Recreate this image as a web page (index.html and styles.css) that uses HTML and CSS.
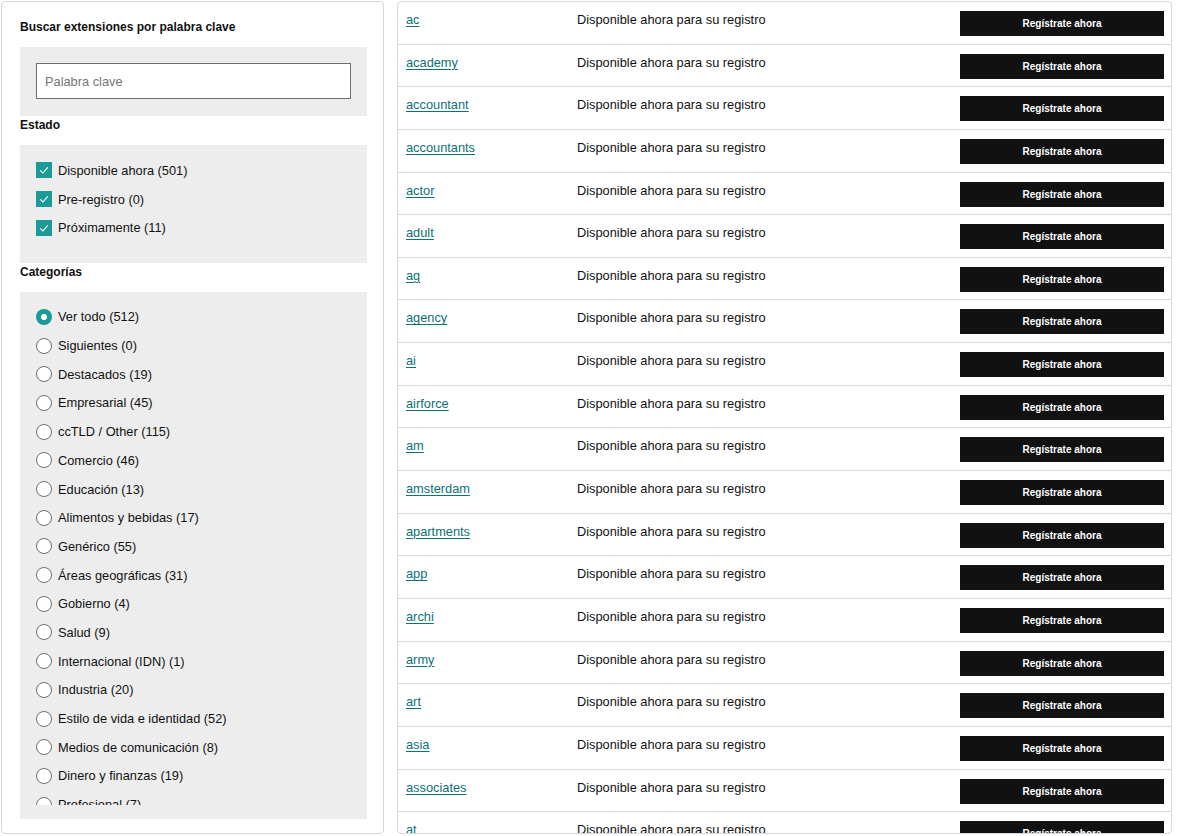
FILE: index.html
```html
<!DOCTYPE html>
<html lang="es">
<head>
<meta charset="utf-8">
<title>Extensiones de dominio</title>
<link rel="stylesheet" href="styles.css">
</head>
<body>
<div class="page">
  <aside class="filters">
    <h3 class="f-title">Buscar extensiones por palabra clave</h3>
    <div class="box box-search">
      <input class="kw" type="text" placeholder="Palabra clave">
    </div>

    <h3 class="f-title f-section">Estado</h3>
    <div class="box box-status">
      <label class="opt"><span class="cb"><svg viewBox="0 0 16 16" width="16" height="16"><polyline points="4.2,8.4 6.9,11 11.8,5.4" fill="none" stroke="#fff" stroke-width="1.1"/></svg></span>Disponible ahora (501)</label>
      <label class="opt"><span class="cb"><svg viewBox="0 0 16 16" width="16" height="16"><polyline points="4.2,8.4 6.9,11 11.8,5.4" fill="none" stroke="#fff" stroke-width="1.1"/></svg></span>Pre-registro (0)</label>
      <label class="opt"><span class="cb"><svg viewBox="0 0 16 16" width="16" height="16"><polyline points="4.2,8.4 6.9,11 11.8,5.4" fill="none" stroke="#fff" stroke-width="1.1"/></svg></span>Próximamente (11)</label>
    </div>

    <h3 class="f-title f-section">Categorías</h3>
    <div class="box box-cats">
      <div class="cat-scroll">
        <label class="opt"><span class="rb rb-on"></span>Ver todo (512)</label>
        <label class="opt"><span class="rb"></span>Siguientes (0)</label>
        <label class="opt"><span class="rb"></span>Destacados (19)</label>
        <label class="opt"><span class="rb"></span>Empresarial (45)</label>
        <label class="opt"><span class="rb"></span>ccTLD / Other (115)</label>
        <label class="opt"><span class="rb"></span>Comercio (46)</label>
        <label class="opt"><span class="rb"></span>Educación (13)</label>
        <label class="opt"><span class="rb"></span>Alimentos y bebidas (17)</label>
        <label class="opt"><span class="rb"></span>Genérico (55)</label>
        <label class="opt"><span class="rb"></span>Áreas geográficas (31)</label>
        <label class="opt"><span class="rb"></span>Gobierno (4)</label>
        <label class="opt"><span class="rb"></span>Salud (9)</label>
        <label class="opt"><span class="rb"></span>Internacional (IDN) (1)</label>
        <label class="opt"><span class="rb"></span>Industria (20)</label>
        <label class="opt"><span class="rb"></span>Estilo de vida e identidad (52)</label>
        <label class="opt"><span class="rb"></span>Medios de comunicación (8)</label>
        <label class="opt"><span class="rb"></span>Dinero y finanzas (19)</label>
        <label class="opt"><span class="rb"></span>Profesional (7)</label>
        <label class="opt"><span class="rb"></span>Tecnología (40)</label>
      </div>
    </div>
  </aside>

  <main class="results">
    <div class="row"><a class="tld" href="#">ac</a><span class="status">Disponible ahora para su registro</span><button class="btn">Regístrate ahora</button></div>
    <div class="row"><a class="tld" href="#">academy</a><span class="status">Disponible ahora para su registro</span><button class="btn">Regístrate ahora</button></div>
    <div class="row"><a class="tld" href="#">accountant</a><span class="status">Disponible ahora para su registro</span><button class="btn">Regístrate ahora</button></div>
    <div class="row"><a class="tld" href="#">accountants</a><span class="status">Disponible ahora para su registro</span><button class="btn">Regístrate ahora</button></div>
    <div class="row"><a class="tld" href="#">actor</a><span class="status">Disponible ahora para su registro</span><button class="btn">Regístrate ahora</button></div>
    <div class="row"><a class="tld" href="#">adult</a><span class="status">Disponible ahora para su registro</span><button class="btn">Regístrate ahora</button></div>
    <div class="row"><a class="tld" href="#">ag</a><span class="status">Disponible ahora para su registro</span><button class="btn">Regístrate ahora</button></div>
    <div class="row"><a class="tld" href="#">agency</a><span class="status">Disponible ahora para su registro</span><button class="btn">Regístrate ahora</button></div>
    <div class="row"><a class="tld" href="#">ai</a><span class="status">Disponible ahora para su registro</span><button class="btn">Regístrate ahora</button></div>
    <div class="row"><a class="tld" href="#">airforce</a><span class="status">Disponible ahora para su registro</span><button class="btn">Regístrate ahora</button></div>
    <div class="row"><a class="tld" href="#">am</a><span class="status">Disponible ahora para su registro</span><button class="btn">Regístrate ahora</button></div>
    <div class="row"><a class="tld" href="#">amsterdam</a><span class="status">Disponible ahora para su registro</span><button class="btn">Regístrate ahora</button></div>
    <div class="row"><a class="tld" href="#">apartments</a><span class="status">Disponible ahora para su registro</span><button class="btn">Regístrate ahora</button></div>
    <div class="row"><a class="tld" href="#">app</a><span class="status">Disponible ahora para su registro</span><button class="btn">Regístrate ahora</button></div>
    <div class="row"><a class="tld" href="#">archi</a><span class="status">Disponible ahora para su registro</span><button class="btn">Regístrate ahora</button></div>
    <div class="row"><a class="tld" href="#">army</a><span class="status">Disponible ahora para su registro</span><button class="btn">Regístrate ahora</button></div>
    <div class="row"><a class="tld" href="#">art</a><span class="status">Disponible ahora para su registro</span><button class="btn">Regístrate ahora</button></div>
    <div class="row"><a class="tld" href="#">asia</a><span class="status">Disponible ahora para su registro</span><button class="btn">Regístrate ahora</button></div>
    <div class="row"><a class="tld" href="#">associates</a><span class="status">Disponible ahora para su registro</span><button class="btn">Regístrate ahora</button></div>
    <div class="row"><a class="tld" href="#">at</a><span class="status">Disponible ahora para su registro</span><button class="btn">Regístrate ahora</button></div>
    <div class="row"><a class="tld" href="#">attorney</a><span class="status">Disponible ahora para su registro</span><button class="btn">Regístrate ahora</button></div>
  </main>
</div>
</body>
</html>
```

FILE: styles.css
```css
* { box-sizing: border-box; }

html, body {
  margin: 0;
  padding: 0;
  background: #fff;
}

body {
  font-family: "Liberation Sans", Arial, sans-serif;
  color: #111;
  font-size: 12.8px;
}

.page {
  display: flex;
  gap: 13px;
  padding: 1px 5px 0 1px;
  height: 836px;
  overflow: hidden;
}

/* ---------- Filters ---------- */
.filters {
  width: 383px;
  height: 833px;
  flex: none;
  border: 1px solid #d6d6d6;
  border-radius: 4px;
  padding: 17px 16px 0 18px;
  overflow: hidden;
}

.f-title {
  margin: 0;
  font-size: 12px;
  line-height: 16px;
  font-weight: 700;
  color: #111;
}

.f-section {
  line-height: 18px;
  margin-bottom: 11px;
}

.box {
  background: #ededed;
}

.box-search {
  margin-top: 12px;
  padding: 16px 16px 17px;
}

.kw {
  display: block;
  width: 100%;
  height: 36px;
  border: 1px solid #6f6f6f;
  border-radius: 0;
  background: #fff;
  padding: 0 8px;
  font-family: "Liberation Sans", Arial, sans-serif;
  font-size: 12.8px;
  color: #111;
  outline: none;
}

.kw::placeholder {
  color: #767676;
}

.box-status {
  padding: 11px 16px 21px;
}

.opt {
  display: flex;
  align-items: center;
  gap: 6px;
  height: 28.7px;
  font-size: 12.8px;
  color: #111;
  white-space: nowrap;
}

.cb {
  width: 16px;
  height: 16px;
  flex: none;
  background: #1a9b98;
  display: block;
}

.cb svg { display: block; }

.rb {
  width: 16px;
  height: 16px;
  flex: none;
  border-radius: 50%;
  background: #fff;
  border: 1px solid #6f6f6f;
}

.rb-on {
  border: 0;
  background: radial-gradient(circle at center, #fff 0, #fff 2.7px, #1a9b98 3.4px);
}

.box-cats {
  height: 527px;
  padding: 0 16px 14px;
  display: flex;
  flex-direction: column;
}

.cat-scroll {
  flex: 1;
  overflow: hidden;
  padding-top: 10.5px;
}

/* ---------- Results ---------- */
.results {
  flex: 1;
  height: 833px;
  border: 1px solid #d4dbe0;
  border-radius: 4px;
  overflow: hidden;
}

.row {
  display: grid;
  grid-template-columns: 171px 1fr 204px;
  align-items: start;
  height: 42.65px;
  padding: 0 7px 0 8px;
  border-bottom: 1px solid #d4dbe0;
}

.tld, .status {
  padding-top: 9px;
  line-height: 18px;
  font-size: 12.8px;
}

.tld {
  color: #0d7176;
  text-decoration: underline;
  text-underline-offset: 2px;
  justify-self: start;
}

.status {
  color: #111;
}

.btn {
  margin-top: 9px;
  height: 25px;
  width: 204px;
  border: 0;
  border-radius: 0;
  background: #111;
  color: #fff;
  font-family: "Liberation Sans", Arial, sans-serif;
  font-weight: 700;
  font-size: 10px;
  padding: 0;
  cursor: pointer;
}
```
